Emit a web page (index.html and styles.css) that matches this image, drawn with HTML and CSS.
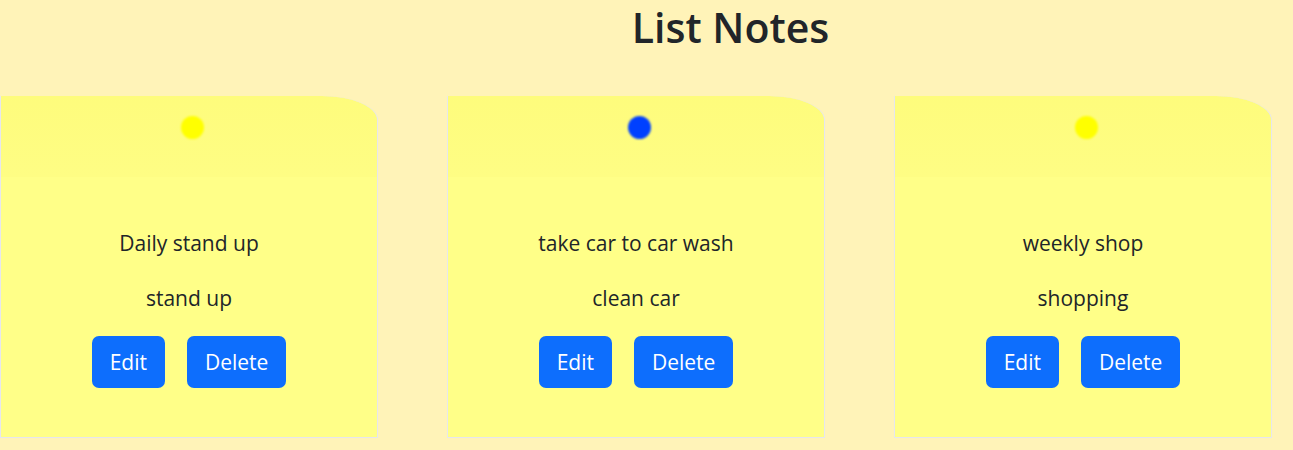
FILE: index.html
```html
<!DOCTYPE html>
<html>
<head>
<meta charset="utf-8">
<link rel="stylesheet" href="styles.css">
</head>
<body>
<h1 class="title">List Notes</h1>
<div class="notes">
  <div class="note">
    <div class="pin pin-yellow"></div>
    <p class="note-title">Daily stand up</p>
    <p class="note-body">stand up</p>
    <div class="actions"><button class="btn">Edit</button><button class="btn">Delete</button></div>
  </div>
  <div class="note">
    <div class="pin pin-blue"></div>
    <p class="note-title">take car to car wash</p>
    <p class="note-body">clean car</p>
    <div class="actions"><button class="btn">Edit</button><button class="btn">Delete</button></div>
  </div>
  <div class="note">
    <div class="pin pin-yellow"></div>
    <p class="note-title">weekly shop</p>
    <p class="note-body">shopping</p>
    <div class="actions"><button class="btn">Edit</button><button class="btn">Delete</button></div>
  </div>
</div>
</body>
</html>
```
FILE: styles.css
```css
* { box-sizing: border-box; }
body {
  margin: 0;
  background: #fff3b8;
  font-family: "Open Sans", "Noto Sans", sans-serif;
  color: #212529;
}
.title {
  margin: 0;
  padding-left: 168px;
  text-align: center;
  font-size: 41px;
  font-weight: 600;
  line-height: 54px;
}
.notes {
  display: flex;
  gap: 69px;
  margin-top: 42px;
}
.note {
  flex: 0 0 378px;
  height: 342px;
  background: linear-gradient(#fefc7c 0, #fefd84 81px, #ffff88 81px);
  border: 1px solid #e6e6ee;
  border-top: none;
  border-top-right-radius: 56px 24px;
  display: flex;
  flex-direction: column;
  align-items: center;
  padding-top: 20px;
}
.pin {
  width: 23px;
  height: 23px;
  border-radius: 50%;
  margin-left: 6px;
  filter: blur(1px);
}
.pin-yellow { background: #ffff00; }
.pin-blue { background: #0040ff; }
.note-title, .note-body {
  margin: 0;
  font-size: 21px;
  line-height: 28px;
}
.note-title { margin-top: 90px; }
.note-body { margin-top: 27px; }
.actions {
  display: flex;
  gap: 22px;
  margin-top: 24px;
}
.btn {
  font-family: inherit;
  font-size: 21px;
  line-height: 30px;
  padding: 11px 18px;
  border: none;
  border-radius: 7px;
  background: #0d6efd;
  color: #fff;
}
```
